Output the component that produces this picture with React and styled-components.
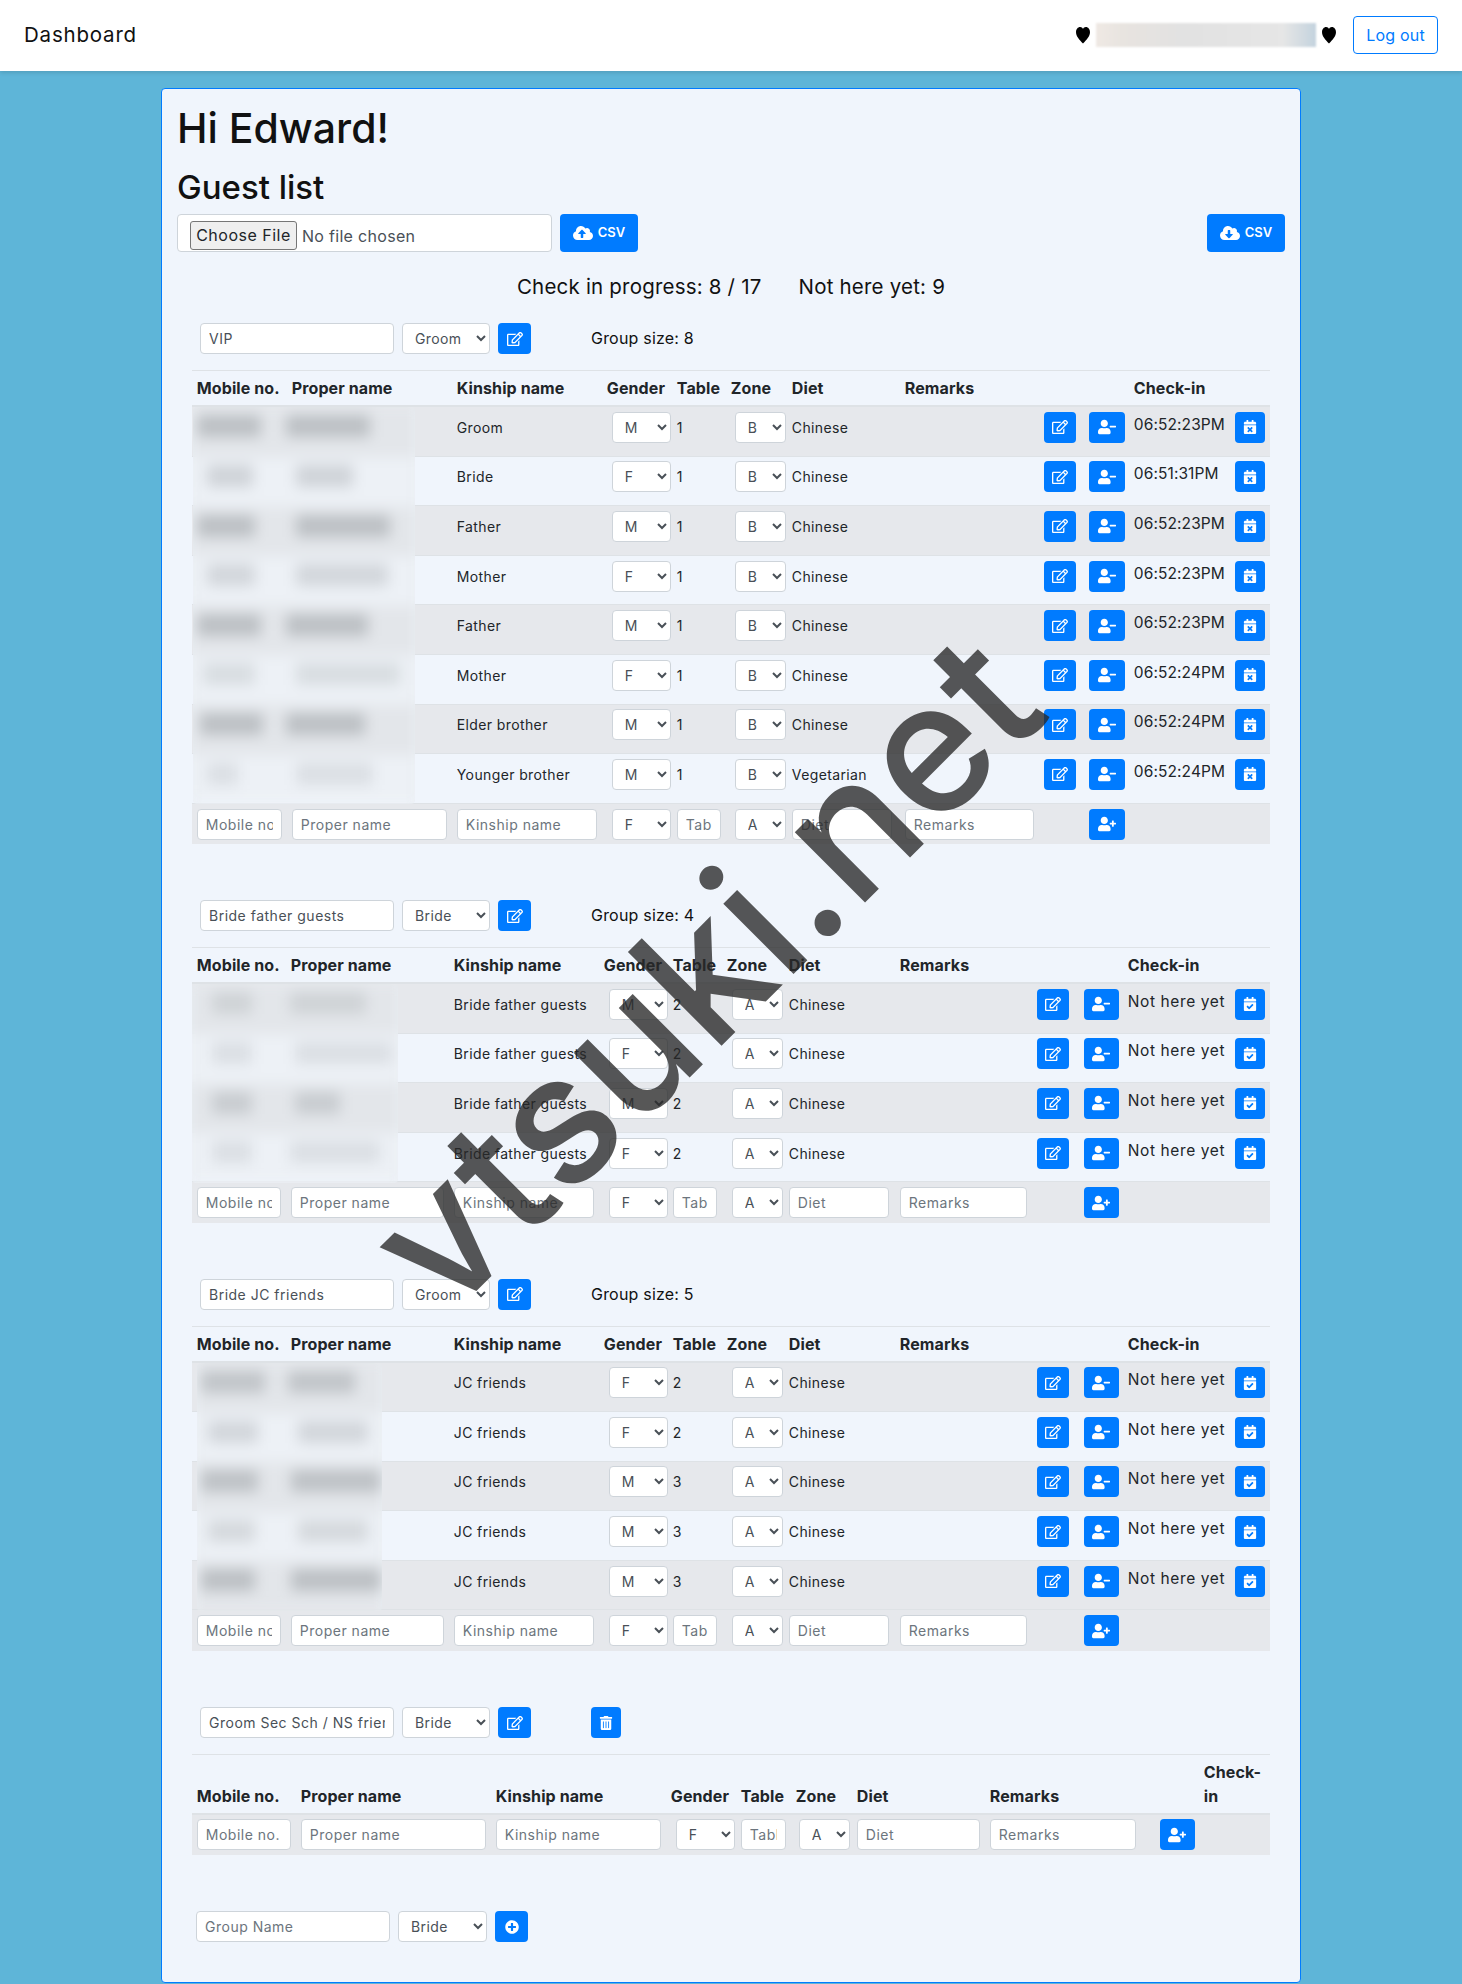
import React from 'react';
import styled, { createGlobalStyle } from 'styled-components';
import {
  FaCalendarCheck,
  FaCalendarTimes,
  FaCloudDownloadAlt,
  FaCloudUploadAlt,
  FaPlusCircle,
  FaRegEdit,
  FaTrashAlt,
  FaUserMinus,
  FaUserPlus,
} from 'react-icons/fa';

const GlobalStyle = createGlobalStyle`
  * { box-sizing: border-box; }
  html, body { margin: 0; padding: 0; }
  body {
    background: #5eb5d8;
    color: #212529;
    font-family: Inter, "Open Sans", "Liberation Sans", sans-serif;
    font-size: 16px;
    line-height: 1.5;
  }
`;

const Page = styled.div`
  position: relative;
  height: 1984px;
  overflow: hidden;
`;

const Navbar = styled.nav`
  display: flex;
  align-items: center;
  justify-content: space-between;
  height: 70.5px;
  padding: 0 24px;
  background: #fff;
  box-shadow: 0 2px 4px rgba(0, 0, 0, 0.12);
`;

const Brand = styled.div`
  font-size: 20.5px;
  letter-spacing: 0.8px;
  color: #111;
`;

const NavRight = styled.div`
  display: flex;
  align-items: center;
`;

const HeartIcon = styled.svg`
  width: 18px;
  height: 18px;
  fill: #000;
`;

const BlurredName = styled.div`
  width: 220px;
  height: 24px;
  margin: 0 4px;
  background: linear-gradient(90deg, #efe9e4 0%, #e8e4e0 12%, #e2e2e2 40%, #e6e6e6 85%, #c4d3de 100%);
  filter: blur(1px);
`;

const LogoutButton = styled.button`
  height: 38px;
  width: 85px;
  margin-left: 15px;
  padding: 0;
  background: transparent;
  border: 1px solid #007bff;
  border-radius: 4px;
  color: #007bff;
  font: inherit;
  letter-spacing: 0.2px;
`;

const Card = styled.main`
  width: 1140px;
  height: 1895.5px;
  margin: 17px 0 0 161px;
  padding: 15px;
  background: #f0f5fc;
  border: 1px solid #007bff;
  border-radius: 4px;
`;

const Title = styled.h1`
  margin: 0 0 16px;
  font-size: 41px;
  font-weight: 500;
  line-height: 48px;
  color: #111;
`;

const Subtitle = styled.h2`
  margin: 0 0 8px;
  font-size: 33px;
  font-weight: 500;
  line-height: 38.4px;
  color: #111;
`;

const UploadRow = styled.div`
  display: flex;
  align-items: center;
  gap: 8px;
`;

const FileInput = styled.input`
  width: 375px;
  height: 38px;
  padding: 6px 12px;
  background: #fff;
  border: 1px solid #ced4da;
  border-radius: 4px;
  color: #495057;
  font: inherit;
  font-size: 16px;
  line-height: 24px;
  letter-spacing: 0.3px;

  &::file-selector-button {
    width: 107px;
    height: 29px;
    margin: 0 5px 0 0;
    padding: 0;
    background: #efefef;
    border: 1px solid #767676;
    border-radius: 3px;
    color: #212529;
    font: inherit;
    letter-spacing: 0.5px;
  }
`;

const CsvButton = styled.button`
  display: inline-flex;
  align-items: center;
  justify-content: center;
  gap: 5px;
  width: 78px;
  height: 38px;
  padding: 0;
  background: #007bff;
  border: 0;
  border-radius: 4px;
  color: #fff;
  font: inherit;
  font-size: 13px;
  font-weight: 600;
  margin-left: ${(p) => (p.$push ? 'auto' : '0')};

  svg {
    width: 20px;
    height: 20px;
  }
`;

const Progress = styled.div`
  display: flex;
  justify-content: center;
  gap: 37px;
  margin: 20.5px 0 21px;
  font-size: 20.5px;
  line-height: 30px;
  letter-spacing: 0.2px;
  color: #111;
`;

const Groups = styled.div`
  padding: 0 14px 0 15px;
`;

const GroupBlock = styled.section`
  position: relative;
  margin-bottom: 56px;
`;

const GroupHeader = styled.div`
  display: flex;
  align-items: flex-start;
  gap: 8px;
  margin-bottom: 16px;
  padding-left: ${(p) => p.$indent}px;
`;

const TextField = styled.input`
  display: block;
  width: ${(p) => (p.$w ? `${p.$w}px` : '100%')};
  height: 31px;
  padding: 0 8px;
  background: #fff;
  border: 1px solid #ced4da;
  border-radius: 4px;
  color: #495057;
  font: inherit;
  font-size: 14px;
  letter-spacing: 0.5px;

  &::placeholder {
    color: #6c757d;
    opacity: 1;
  }
`;

const SelectField = styled.select`
  display: block;
  width: ${(p) => p.$w}px;
  height: 31px;
  margin-left: ${(p) => p.$ml || 0}px;
  padding: 0 0 0 8px;
  background: #fff;
  border: 1px solid #ced4da;
  border-radius: 4px;
  color: #495057;
  font: inherit;
  font-size: 14px;
  letter-spacing: 0.4px;
`;

const IconButton = styled.button`
  display: flex;
  align-items: center;
  justify-content: center;
  width: ${(p) => p.$w}px;
  height: 31px;
  padding: 0;
  background: #007bff;
  border: 0;
  border-radius: 4px;
  color: #fff;

  svg {
    width: ${(p) => p.$icon || 14}px;
    height: ${(p) => p.$icon || 14}px;
  }
`;

const GroupSize = styled.span`
  margin-left: 52px;
  line-height: 31px;
  letter-spacing: 0.2px;
  color: #111;
`;

const TrashSlot = styled.span`
  margin-left: 52px;
`;

const Table = styled.table`
  width: 1078px;
  table-layout: fixed;
  border-collapse: collapse;
  font-size: 14px;
  letter-spacing: 0.38px;
`;

const Col = styled.col`
  width: ${(p) => p.$w}px;
`;

const HeadCell = styled.th`
  padding: 4.8px;
  border-top: 1px solid #dee2e6;
  border-bottom: 2px solid #dee2e6;
  font-size: 16px;
  font-weight: 700;
  line-height: 24px;
  text-align: left;
  vertical-align: bottom;
  letter-spacing: 0.1px;
`;

const Row = styled.tr`
  background: ${(p) => (p.$striped ? '#e6e8ec' : 'transparent')};
`;

const Cell = styled.td`
  padding: 4.8px;
  border-top: 1px solid #dee2e6;
  vertical-align: top;
  line-height: 31px;
`;

const ControlStack = styled.div`
  margin-bottom: 8px;
`;

const TimeText = styled.div`
  font-size: 15.5px;
  line-height: 26px;
  white-space: nowrap;
  letter-spacing: ${(p) => (p.$waiting ? '0.6px' : '0.1px')};
`;

const Redaction = styled.div`
  position: absolute;
  left: ${(p) => p.$left}px;
  top: ${(p) => p.$top}px;
  width: ${(p) => p.$width}px;
  overflow: hidden;
  border-radius: 4px;
`;

const BlurLayer = styled.div`
  filter: blur(7px);
  margin: -2px -8px;
  padding: 2px 8px;
  background: #e9edf2;
`;

const BlurRow = styled.div`
  position: relative;
  height: 49.6px;
  background: ${(p) => (p.$striped ? '#e3e6ea' : '#edf1f6')};
`;

const BlurBar = styled.div`
  position: absolute;
  top: 8px;
  left: ${(p) => p.$from}px;
  width: ${(p) => p.$to - p.$from}px;
  height: 22px;
  background: #b2b6ba;
  opacity: ${(p) => p.$alpha};
`;

const Watermark = styled.div`
  position: absolute;
  left: 703px;
  top: 971px;
  transform: translate(-50%, -50%) rotate(-45deg);
  font-size: 182px;
  font-weight: 450;
  line-height: 1;
  white-space: nowrap;
  color: rgba(40, 40, 40, 0.78);
  pointer-events: none;
`;

const fullCols = [95, 165, 150, 70, 54, 61, 113, 139, 45, 45, 101, 40];
const wideCols = [94, 163, 150, 69, 54, 62, 111, 137, 47, 44, 107, 40];
const emptyCols = [104, 195, 175, 70, 55, 61, 133, 170, 44, 71];

const heads = ['Mobile no.', 'Proper name', 'Kinship name', 'Gender', 'Table', 'Zone', 'Diet', 'Remarks'];

const groups = [
  {
    name: 'VIP',
    side: 'Groom',
    size: 8,
    cols: fullCols,
    personW: 36,
    genderMl: 5,
    zoneMl: 4,
    redact: {
      left: 1,
      width: 222,
      rows: [
        [4, 68, 93, 177, 0.8],
        [14, 60, 103, 160, 0.5],
        [4, 62, 103, 197, 0.8],
        [14, 62, 103, 195, 0.45],
        [4, 68, 93, 175, 0.8],
        [10, 62, 103, 207, 0.35],
        [7, 70, 93, 172, 0.8],
        [14, 45, 103, 180, 0.3],
      ],
    },
    guests: [
      ['Groom', 'M', '1', 'B', 'Chinese', '06:52:23PM'],
      ['Bride', 'F', '1', 'B', 'Chinese', '06:51:31PM'],
      ['Father', 'M', '1', 'B', 'Chinese', '06:52:23PM'],
      ['Mother', 'F', '1', 'B', 'Chinese', '06:52:23PM'],
      ['Father', 'M', '1', 'B', 'Chinese', '06:52:23PM'],
      ['Mother', 'F', '1', 'B', 'Chinese', '06:52:24PM'],
      ['Elder brother', 'M', '1', 'B', 'Chinese', '06:52:24PM'],
      ['Younger brother', 'M', '1', 'B', 'Vegetarian', '06:52:24PM'],
    ],
  },
  {
    name: 'Bride father guests',
    side: 'Bride',
    size: 4,
    cols: wideCols,
    personW: 35,
    genderMl: 5,
    zoneMl: 5,
    redact: {
      left: 0,
      width: 206,
      rows: [
        [20, 60, 98, 174, 0.4],
        [20, 60, 103, 200, 0.3],
        [20, 60, 103, 148, 0.55],
        [20, 60, 98, 188, 0.3],
      ],
    },
    guests: [
      ['Bride father guests', 'M', '2', 'A', 'Chinese', null],
      ['Bride father guests', 'F', '2', 'A', 'Chinese', null],
      ['Bride father guests', 'M', '2', 'A', 'Chinese', null],
      ['Bride father guests', 'F', '2', 'A', 'Chinese', null],
    ],
  },
  {
    name: 'Bride JC friends',
    side: 'Groom',
    size: 5,
    cols: wideCols,
    personW: 35,
    genderMl: 5,
    zoneMl: 5,
    redact: {
      left: 5,
      width: 185,
      rows: [
        [4, 68, 91, 158, 0.7],
        [11, 61, 101, 171, 0.45],
        [4, 61, 94, 184, 0.75],
        [11, 58, 101, 171, 0.4],
        [4, 58, 94, 184, 0.8],
      ],
    },
    guests: [
      ['JC friends', 'F', '2', 'A', 'Chinese', null],
      ['JC friends', 'F', '2', 'A', 'Chinese', null],
      ['JC friends', 'M', '3', 'A', 'Chinese', null],
      ['JC friends', 'M', '3', 'A', 'Chinese', null],
      ['JC friends', 'M', '3', 'A', 'Chinese', null],
    ],
  },
];

const Heart = () => (
  <HeartIcon viewBox="0 0 17 17">
    <path d="M8.5 16.5C5.2 12.8 1.9 10 1.9 5.8 1.9 3 3.7 1 5.8 1c1.3 0 2.1.7 2.7 1.8C9.1 1.7 9.9 1 11.2 1c2.1 0 3.9 2 3.9 4.8 0 4.2-3.3 7-6.6 10.7z" />
  </HeartIcon>
);

const GenderSelect = ({ value, ml }) => (
  <SelectField $w={59} $ml={ml} defaultValue={value}>
    <option>M</option>
    <option>F</option>
  </SelectField>
);

const ZoneSelect = ({ value, ml }) => (
  <SelectField $w={51} $ml={ml} defaultValue={value}>
    <option>A</option>
    <option>B</option>
  </SelectField>
);

const SideSelect = ({ value }) => (
  <SelectField $w={88} defaultValue={value}>
    <option>Groom</option>
    <option>Bride</option>
  </SelectField>
);

const NewGuestRow = ({ genderMl, zoneMl, addW, trailing, dietW, remarksW }) => (
  <Row $striped>
    <Cell>
      <TextField placeholder="Mobile no." />
    </Cell>
    <Cell>
      <TextField placeholder="Proper name" />
    </Cell>
    <Cell>
      <TextField placeholder="Kinship name" />
    </Cell>
    <Cell>
      <GenderSelect value="F" ml={genderMl} />
    </Cell>
    <Cell>
      <TextField placeholder="Table" />
    </Cell>
    <Cell>
      <ZoneSelect value="A" ml={zoneMl} />
    </Cell>
    <Cell>
      <TextField $w={dietW} placeholder="Diet" />
    </Cell>
    <Cell>
      <TextField $w={remarksW} placeholder="Remarks" />
    </Cell>
    {trailing > 0 && <Cell />}
    <Cell>
      <IconButton $w={addW} $icon={18}>
        <FaUserPlus />
      </IconButton>
    </Cell>
    <Cell colSpan={trailing > 0 ? trailing : 1} />
  </Row>
);

const GuestGroup = ({ group }) => (
  <GroupBlock>
    <GroupHeader $indent={8}>
      <TextField $w={194} defaultValue={group.name} />
      <SideSelect value={group.side} />
      <IconButton $w={33} $icon={16}>
        <FaRegEdit />
      </IconButton>
      <GroupSize>Group size: {group.size}</GroupSize>
    </GroupHeader>
    <Table>
      <colgroup>
        {group.cols.map((w, i) => (
          <Col key={i} $w={w} />
        ))}
      </colgroup>
      <thead>
        <tr>
          {heads.map((h) => (
            <HeadCell key={h}>{h}</HeadCell>
          ))}
          <HeadCell />
          <HeadCell />
          <HeadCell>Check-in</HeadCell>
          <HeadCell />
        </tr>
      </thead>
      <tbody>
        {group.guests.map((guest, i) => (
          <Row key={i} $striped={i % 2 === 0}>
            <Cell />
            <Cell />
            <Cell>{guest[0]}</Cell>
            <Cell>
              <ControlStack>
                <GenderSelect value={guest[1]} ml={group.genderMl} />
              </ControlStack>
            </Cell>
            <Cell>{guest[2]}</Cell>
            <Cell>
              <ZoneSelect value={guest[3]} ml={group.zoneMl} />
            </Cell>
            <Cell>{guest[4]}</Cell>
            <Cell />
            <Cell>
              <IconButton $w={32} $icon={16}>
                <FaRegEdit />
              </IconButton>
            </Cell>
            <Cell>
              <IconButton $w={group.personW} $icon={18}>
                <FaUserMinus />
              </IconButton>
            </Cell>
            <Cell>
              <TimeText $waiting={!guest[5]}>{guest[5] || 'Not here yet'}</TimeText>
            </Cell>
            <Cell>
              <IconButton $w={30}>{guest[5] ? <FaCalendarTimes /> : <FaCalendarCheck />}</IconButton>
            </Cell>
          </Row>
        ))}
        <NewGuestRow genderMl={group.genderMl} zoneMl={group.zoneMl} addW={group.personW} trailing={2} dietW={100} />
      </tbody>
    </Table>
    <Redaction $left={group.redact.left} $top={84} $width={group.redact.width}>
      <BlurLayer>
        {group.redact.rows.map((r, i) => (
          <BlurRow key={i} $striped={i % 2 === 0}>
            <BlurBar $from={r[0]} $to={r[1]} $alpha={r[4]} />
            <BlurBar $from={r[2]} $to={r[3]} $alpha={r[4]} />
          </BlurRow>
        ))}
      </BlurLayer>
    </Redaction>
  </GroupBlock>
);

const EmptyGroup = () => (
  <GroupBlock>
    <GroupHeader $indent={8}>
      <TextField $w={194} defaultValue="Groom Sec Sch / NS friends" />
      <SideSelect value="Bride" />
      <IconButton $w={33} $icon={16}>
        <FaRegEdit />
      </IconButton>
      <TrashSlot>
        <IconButton $w={30}>
          <FaTrashAlt />
        </IconButton>
      </TrashSlot>
    </GroupHeader>
    <Table>
      <colgroup>
        {emptyCols.map((w, i) => (
          <Col key={i} $w={w} />
        ))}
      </colgroup>
      <thead>
        <tr>
          {heads.map((h) => (
            <HeadCell key={h}>{h}</HeadCell>
          ))}
          <HeadCell />
          <HeadCell>Check-in</HeadCell>
        </tr>
      </thead>
      <tbody>
        <NewGuestRow genderMl={5} zoneMl={3} addW={35} trailing={0} remarksW={146} />
      </tbody>
    </Table>
  </GroupBlock>
);

const App = () => (
  <Page>
    <GlobalStyle />
    <Navbar>
      <Brand>Dashboard</Brand>
      <NavRight>
        <Heart />
        <BlurredName />
        <Heart />
        <LogoutButton>Log out</LogoutButton>
      </NavRight>
    </Navbar>
    <Card>
      <Title>Hi Edward!</Title>
      <Subtitle>Guest list</Subtitle>
      <UploadRow>
        <FileInput type="file" />
        <CsvButton>
          <FaCloudUploadAlt />
          CSV
        </CsvButton>
        <CsvButton $push>
          <FaCloudDownloadAlt />
          CSV
        </CsvButton>
      </UploadRow>
      <Progress>
        <span>Check in progress: 8 / 17</span>
        <span>Not here yet: 9</span>
      </Progress>
      <Groups>
        {groups.map((group) => (
          <GuestGroup key={group.name} group={group} />
        ))}
        <EmptyGroup />
        <GroupHeader $indent={4}>
          <TextField $w={194} placeholder="Group Name" />
          <SelectField $w={89} defaultValue="Bride">
            <option>Groom</option>
            <option>Bride</option>
          </SelectField>
          <IconButton $w={33}>
            <FaPlusCircle />
          </IconButton>
        </GroupHeader>
      </Groups>
    </Card>
    <Watermark>vtsuki.net</Watermark>
  </Page>
);

export default App;
